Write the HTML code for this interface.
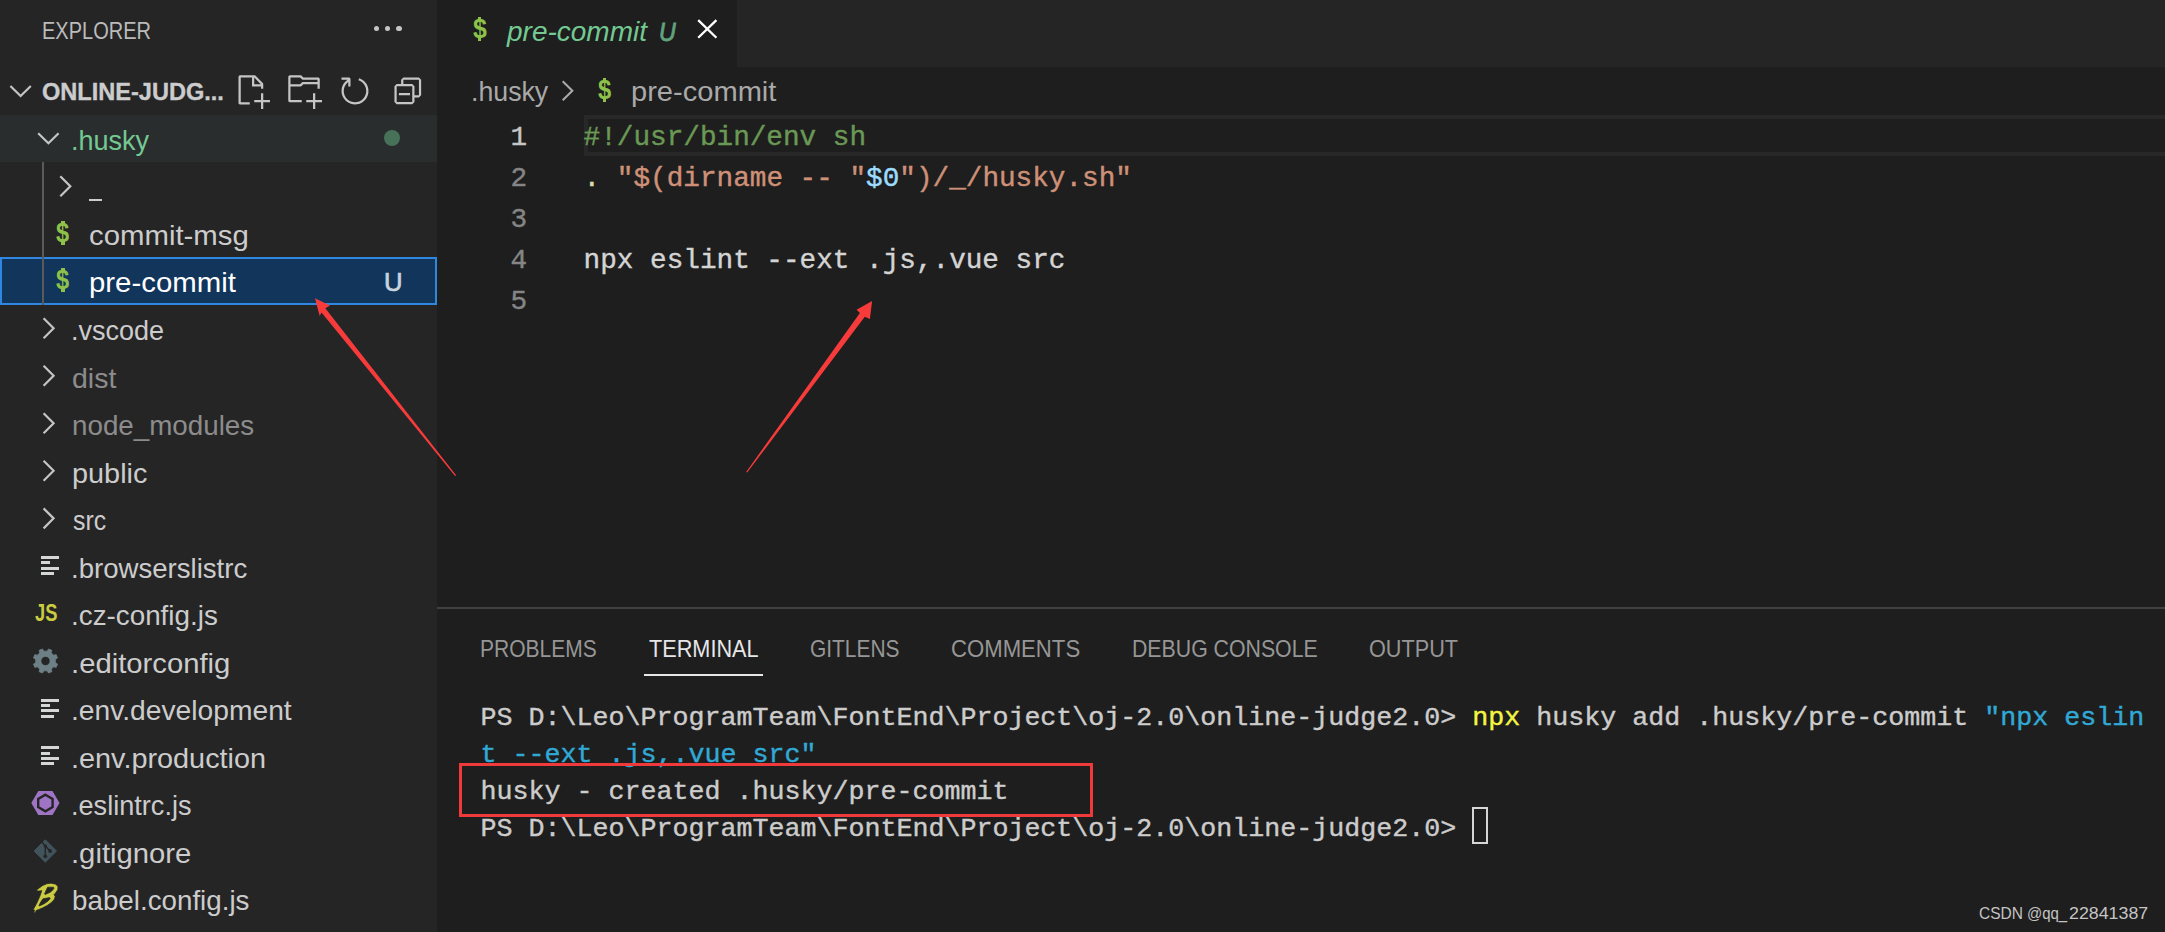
<!DOCTYPE html>
<html>
<head>
<meta charset="utf-8">
<title>pre-commit</title>
<style>
*{box-sizing:border-box;margin:0;padding:0}
html,body{width:2165px;height:932px;overflow:hidden;background:#1e1e1e}
body{font-family:"Liberation Sans",sans-serif;color:#cccccc;position:relative}
.abs{position:absolute}
.t{position:absolute;white-space:pre;transform-origin:0 0;line-height:1}
svg{position:absolute;overflow:visible}
#side{position:absolute;left:0;top:0;width:437px;height:932px;background:#252526}
</style>
</head>
<body>
<div id="side"></div>
<div class="t" style="left:41.85px;top:20px;font-size:23.5px;color:#bbbbbb;transform:scaleX(0.8515);">EXPLORER</div>
<div class="abs" style="left:374.00px;top:25.90px;width:5.4px;height:5.4px;border-radius:50%;background:#c5c5c5"></div>
<div class="abs" style="left:385.00px;top:25.90px;width:5.4px;height:5.4px;border-radius:50%;background:#c5c5c5"></div>
<div class="abs" style="left:396.20px;top:25.90px;width:5.4px;height:5.4px;border-radius:50%;background:#c5c5c5"></div>
<svg style="left:0;top:0" width="437" height="932"><polyline points="10.400000000000002,86 20.6,96 30.8,86" fill="none" stroke="#c5c5c5" stroke-width="2.2"/></svg>
<div class="t" style="left:42.30px;top:81px;font-size:23.5px;color:#cccccc;transform:scaleX(1.0019);font-weight:bold;-webkit-text-stroke:0.35px;">ONLINE-JUDG...</div>
<div class="abs" style="left:0;top:115px;width:437px;height:47px;background:#2a2d2e"></div>
<div class="abs" style="left:0;top:257px;width:437px;height:48px;background:#11355b;border:2px solid #3087df"></div>
<div class="abs" style="left:42px;top:162px;width:2px;height:143px;background:#5a5a5a"></div>
<svg style="left:0;top:0" width="437" height="932"><polyline points="38.2,133.2 48.4,143.2 58.599999999999994,133.2" fill="none" stroke="#c5c5c5" stroke-width="2.2"/></svg>
<div class="t" style="left:70.97px;top:127px;font-size:28px;color:#73c991;transform:scaleX(0.9655);">.husky</div>
<div class="abs" style="left:383.7px;top:129.7px;width:16.6px;height:16.6px;border-radius:50%;background:#48715a"></div>
<svg style="left:0;top:0" width="437" height="932"><polyline points="60.3,176.2 70.3,186.2 60.3,196.2" fill="none" stroke="#c5c5c5" stroke-width="2.2"/></svg>
<div class="abs" style="left:89px;top:199px;width:12.7px;height:2.2px;background:#cccccc"></div>
<div class="t" style="left:56.10px;top:219px;font-size:28px;color:#8dc149;transform:scaleX(0.8437);font-weight:bold;">$</div>
<div class="abs" style="left:61.15px;top:220.80px;width:3.4px;height:4.5px;background:#8dc149"></div>
<div class="abs" style="left:61.15px;top:241.30px;width:3.4px;height:4px;background:#8dc149"></div>
<div class="t" style="left:88.65px;top:222px;font-size:28px;color:#cccccc;transform:scaleX(1.0482);">commit-msg</div>
<div class="t" style="left:56.10px;top:266px;font-size:28px;color:#8dc149;transform:scaleX(0.8437);font-weight:bold;">$</div>
<div class="abs" style="left:61.15px;top:267.80px;width:3.4px;height:4.5px;background:#8dc149"></div>
<div class="abs" style="left:61.15px;top:288.30px;width:3.4px;height:4px;background:#8dc149"></div>
<div class="t" style="left:88.65px;top:269px;font-size:28px;color:#ffffff;transform:scaleX(1.0486);">pre-commit</div>
<div class="t" style="left:383.86px;top:269px;font-size:26.5px;color:#c8d4df;transform:scaleX(0.9688);-webkit-text-stroke:0.7px;">U</div>
<svg style="left:0;top:0" width="437" height="932"><polyline points="43.6,318.28000000000003 53.6,328.28000000000003 43.6,338.28000000000003" fill="none" stroke="#c5c5c5" stroke-width="2.2"/></svg>
<div class="t" style="left:70.97px;top:317px;font-size:28px;color:#cccccc;transform:scaleX(0.9646);">.vscode</div>
<svg style="left:0;top:0" width="437" height="932"><polyline points="43.6,365.8 53.6,375.8 43.6,385.8" fill="none" stroke="#c5c5c5" stroke-width="2.2"/></svg>
<div class="t" style="left:71.88px;top:365px;font-size:28px;color:#8c8c8c;transform:scaleX(1.0165);">dist</div>
<svg style="left:0;top:0" width="437" height="932"><polyline points="43.6,413.32 53.6,423.32 43.6,433.32" fill="none" stroke="#c5c5c5" stroke-width="2.2"/></svg>
<div class="t" style="left:71.91px;top:412px;font-size:28px;color:#8c8c8c;transform:scaleX(0.9918);">node_modules</div>
<svg style="left:0;top:0" width="437" height="932"><polyline points="43.6,460.84000000000003 53.6,470.84000000000003 43.6,480.84000000000003" fill="none" stroke="#c5c5c5" stroke-width="2.2"/></svg>
<div class="t" style="left:71.87px;top:460px;font-size:28px;color:#cccccc;transform:scaleX(1.0311);">public</div>
<svg style="left:0;top:0" width="437" height="932"><polyline points="43.6,508.36 53.6,518.36 43.6,528.36" fill="none" stroke="#c5c5c5" stroke-width="2.2"/></svg>
<div class="t" style="left:72.90px;top:507px;font-size:28px;color:#cccccc;transform:scaleX(0.8868);">src</div>
<div class="t" style="left:71.03px;top:555px;font-size:28px;color:#cccccc;transform:scaleX(0.9852);">.browserslistrc</div>
<div class="t" style="left:71.01px;top:602px;font-size:28px;color:#cccccc;transform:scaleX(0.9930);">.cz-config.js</div>
<div class="t" style="left:70.91px;top:650px;font-size:28px;color:#cccccc;transform:scaleX(1.0445);">.editorconfig</div>
<div class="t" style="left:70.98px;top:697px;font-size:28px;color:#cccccc;transform:scaleX(1.0079);">.env.development</div>
<div class="t" style="left:70.94px;top:745px;font-size:28px;color:#cccccc;transform:scaleX(1.0301);">.env.production</div>
<div class="t" style="left:71.06px;top:792px;font-size:28px;color:#cccccc;transform:scaleX(0.9682);">.eslintrc.js</div>
<div class="t" style="left:70.91px;top:840px;font-size:28px;color:#cccccc;transform:scaleX(1.0443);">.gitignore</div>
<div class="t" style="left:72.01px;top:887px;font-size:28px;color:#cccccc;transform:scaleX(0.9915);">babel.config.js</div>
<div class="abs" style="left:40.8px;top:556.0px;width:18.3px;height:3px;background:#d4d7d6"></div>
<div class="abs" style="left:40.8px;top:561.4px;width:9.2px;height:3px;background:#d4d7d6"></div>
<div class="abs" style="left:40.8px;top:566.8px;width:18.3px;height:3px;background:#d4d7d6"></div>
<div class="abs" style="left:40.8px;top:572.2px;width:13px;height:3px;background:#d4d7d6"></div>
<div class="abs" style="left:40.8px;top:698.6px;width:18.3px;height:3px;background:#d4d7d6"></div>
<div class="abs" style="left:40.8px;top:704.0px;width:9.2px;height:3px;background:#d4d7d6"></div>
<div class="abs" style="left:40.8px;top:709.4px;width:18.3px;height:3px;background:#d4d7d6"></div>
<div class="abs" style="left:40.8px;top:714.8px;width:13px;height:3px;background:#d4d7d6"></div>
<div class="abs" style="left:40.8px;top:746.1px;width:18.3px;height:3px;background:#d4d7d6"></div>
<div class="abs" style="left:40.8px;top:751.5px;width:9.2px;height:3px;background:#d4d7d6"></div>
<div class="abs" style="left:40.8px;top:756.9px;width:18.3px;height:3px;background:#d4d7d6"></div>
<div class="abs" style="left:40.8px;top:762.3px;width:13px;height:3px;background:#d4d7d6"></div>
<div class="t" style="left:34.80px;top:602px;font-size:23px;color:#cbcb41;transform:scaleX(0.7952);font-weight:bold;">JS</div>
<svg style="left:233.85px;top:72.6px" width="36.00" height="36.00" viewBox="0 0 16 16"><path d="M9.5 1.1l3.4 3.5.1.4v2h-1V6H8V2H3v11h4v1H2.5l-.5-.5v-12l.5-.5h6.7l.3.1zM9 2v3h2.9L9 2zm4 14h-1v-3H9v-1h3V9h1v3h3v1h-3v3z" fill="#c5c5c5"/></svg>
<svg style="left:285.6px;top:72.6px" width="36.00" height="36.00" viewBox="0 0 16 16"><path d="M14.5 2H7.71l-.85-.85L6.51 1h-5l-.5.5v11l.5.5H7v-1H1.99V6h4.49l.35-.15.86-.86H14v1.5l-.001.51h1.011V2.5L14.5 2zm-.51 2h-6.5l-.35.15-.86.86H2v-3h4.29l.85.85.36.15H14l-.01.99zM13 16h-1v-3H9v-1h3V9h1v3h3v1h-3v3z" fill="#c5c5c5"/></svg>
<svg style="left:337.2px;top:72.6px" width="36.00" height="36.00" viewBox="0 0 16 16"><path d="M4.681 3H2V2h3.5l.5.5V6H5V4a5 5 0 1 0 4.53-.761l.302-.954A6 6 0 1 1 4.681 3z" fill="#c5c5c5"/></svg>
<svg style="left:389.8px;top:72.8px" width="35.60" height="35.60" viewBox="0 0 16 16"><path d="M9 9H4v1h5V9z M5 3l1-1h7l1 1v7l-1 1h-2v2l-1 1H3l-1-1V6l1-1h2V3zm1 2h4l1 1v4h2V3H6v2zm4 1H3v7h7V6z" fill="#c5c5c5" fill-rule="evenodd" clip-rule="evenodd"/></svg>
<svg style="left:0;top:0" width="437" height="932"><path d="M55.35 662.74 L57.53 664.00 L56.13 667.39 L53.69 666.74 L51.24 669.19 L51.89 671.63 L48.50 673.03 L47.24 670.85 L43.76 670.85 L42.50 673.03 L39.11 671.63 L39.76 669.19 L37.31 666.74 L34.87 667.39 L33.47 664.00 L35.65 662.74 L35.65 659.26 L33.47 658.00 L34.87 654.61 L37.31 655.26 L39.76 652.81 L39.11 650.37 L42.50 648.97 L43.76 651.15 L47.24 651.15 L48.50 648.97 L51.89 650.37 L51.24 652.81 L53.69 655.26 L56.13 654.61 L57.53 658.00 L55.35 659.26Z M40.90 661.00 a4.6 4.6 0 1 0 9.2 0 a4.6 4.6 0 1 0 -9.2 0Z" fill="#6d8086" fill-rule="evenodd" stroke="#6d8086" stroke-width="0.8" stroke-linejoin="round"/></svg>
<svg style="left:0;top:0" width="437" height="932"><polygon points="31.299999999999997,803 38.29,790.9 52.51,790.9 59.5,803 52.51,815.1 38.29,815.1" fill="#a074c4"/><polygon points="45.40,794.70 52.59,798.85 52.59,807.15 45.40,811.30 38.21,807.15 38.21,798.85" fill="none" stroke="#252526" stroke-width="2.4"/></svg>
<svg style="left:0;top:0" width="437" height="932"><polygon points="34.099999999999994,851 45.3,839.8 56.5,851 45.3,862.2" fill="#41535b" stroke="#41535b" stroke-width="1" stroke-linejoin="round"/><path d="M41.65 841.8 L45.3 845.9 V856.3 M45.3 845.9 L50.099999999999994 851" stroke="#252526" stroke-width="1.4" fill="none"/><circle cx="45.3" cy="845.9" r="1.6" fill="#252526"/><circle cx="50.099999999999994" cy="851" r="1.9" fill="#252526"/><circle cx="45.3" cy="856.3" r="1.9" fill="#252526"/></svg>
<svg style="left:0;top:0" width="437" height="932"><path d="M36.01 890.52 L38.64 888.45 L42.39 885.63 L46.90 883.76 L51.03 883.19 L55.54 884.13 L57.98 886.38 L57.79 889.39 L56.29 892.02 L54.04 894.65 L55.16 896.53 L54.41 899.15 L51.78 902.16 L47.65 905.16 L42.77 907.79 L38.26 909.67 L36.38 910.23 L34.88 913.05 L33.94 912.30 L34.58 910.05 L33.19 909.67 L36.76 903.29 L39.77 896.53 L41.83 890.70 L38.64 890.97Z M47.65 887.14 L53.47 887.21 L54.04 888.08 L52.54 890.33 L49.91 892.39 L45.02 894.57 L44.54 893.97 L46.34 889.77Z M42.96 898.78 L49.53 897.58 L50.28 898.40 L48.03 901.03 L44.27 903.66 L39.39 905.99 L38.94 905.46 L40.89 901.78Z" fill="#cbcb41" fill-rule="evenodd" stroke="#252526" stroke-width="0.7" stroke-linejoin="round"/></svg>
<div class="abs" style="left:437px;top:0;width:1728px;height:66.5px;background:#252526"></div>
<div class="abs" style="left:437px;top:0;width:300px;height:66.5px;background:#1e1e1e"></div>
<div class="t" style="left:472.70px;top:15px;font-size:28px;color:#8dc149;transform:scaleX(0.8875);font-weight:bold;">$</div>
<div class="abs" style="left:478.10px;top:16.70px;width:3.4px;height:4.5px;background:#8dc149"></div>
<div class="abs" style="left:478.10px;top:37.20px;width:3.4px;height:4px;background:#8dc149"></div>
<div class="t" style="left:507.00px;top:18px;font-size:28px;color:#73c991;transform:scaleX(0.9998);font-style:italic;">pre-commit</div>
<div class="t" style="left:658.93px;top:19px;font-size:26.5px;color:#62a37e;transform:scaleX(0.8737);font-style:italic;-webkit-text-stroke:0.9px;">U</div>
<svg style="left:0;top:0" width="2165" height="120"><path d="M698.2 20.1 L716.4 37.8 M716.4 20.1 L698.2 37.8" stroke="#ffffff" stroke-width="2.3" fill="none"/></svg>
<div class="t" style="left:470.79px;top:78px;font-size:28px;color:#a9a9a9;transform:scaleX(0.9541);">.husky</div>
<svg style="left:0;top:0" width="2165" height="120"><polyline points="562.7,81.2 572.3,90.7 562.7,100.2" fill="none" stroke="#a9a9a9" stroke-width="2.1"/></svg>
<div class="t" style="left:598.00px;top:76px;font-size:28px;color:#8dc149;transform:scaleX(0.8500);font-weight:bold;">$</div>
<div class="abs" style="left:603.10px;top:77.80px;width:3.4px;height:4.5px;background:#8dc149"></div>
<div class="abs" style="left:603.10px;top:98.30px;width:3.4px;height:4px;background:#8dc149"></div>
<div class="t" style="left:631.36px;top:78px;font-size:28px;color:#a9a9a9;transform:scaleX(1.0385);">pre-commit</div>
<div class="abs" style="left:584px;top:115px;width:1581px;height:41px;border:4px solid #282828;border-right:none"></div>
<div class="t" style="left:510.6px;top:124px;font-size:27.7px;font-family:'Liberation Mono',monospace;-webkit-text-stroke:0.4px;"><span style="color:#c6c6c6">1</span></div>
<div class="t" style="left:510.6px;top:165px;font-size:27.7px;font-family:'Liberation Mono',monospace;-webkit-text-stroke:0.4px;"><span style="color:#858585">2</span></div>
<div class="t" style="left:510.6px;top:206px;font-size:27.7px;font-family:'Liberation Mono',monospace;-webkit-text-stroke:0.4px;"><span style="color:#858585">3</span></div>
<div class="t" style="left:510.6px;top:247px;font-size:27.7px;font-family:'Liberation Mono',monospace;-webkit-text-stroke:0.4px;"><span style="color:#858585">4</span></div>
<div class="t" style="left:510.6px;top:288px;font-size:27.7px;font-family:'Liberation Mono',monospace;-webkit-text-stroke:0.4px;"><span style="color:#858585">5</span></div>
<div class="t" style="left:583.6px;top:124px;font-size:27.7px;font-family:'Liberation Mono',monospace;-webkit-text-stroke:0.4px;"><span style="color:#6a9955">#!/usr/bin/env sh</span></div>
<div class="t" style="left:583.6px;top:165px;font-size:27.7px;font-family:'Liberation Mono',monospace;-webkit-text-stroke:0.4px;"><span style="color:#dcdcaa">.</span><span style="color:#d4d4d4"> </span><span style="color:#ce9178">"$(dirname -- "</span><span style="color:#9cdcfe">$0</span><span style="color:#ce9178">")/_/husky.sh"</span></div>
<div class="t" style="left:583.6px;top:247px;font-size:27.7px;font-family:'Liberation Mono',monospace;-webkit-text-stroke:0.4px;"><span style="color:#d4d4d4">npx eslint --ext .js,.vue src</span></div>
<div class="abs" style="left:437px;top:607px;width:1728px;height:2px;background:#414141"></div>
<div class="t" style="left:480.12px;top:637px;font-size:23.8px;color:#969696;transform:scaleX(0.8821);">PROBLEMS</div>
<div class="t" style="left:649.00px;top:637px;font-size:23.8px;color:#e7e7e7;transform:scaleX(0.9110);">TERMINAL</div>
<div class="t" style="left:810.02px;top:637px;font-size:23.8px;color:#969696;transform:scaleX(0.8794);">GITLENS</div>
<div class="t" style="left:951.27px;top:637px;font-size:23.8px;color:#969696;transform:scaleX(0.9304);">COMMENTS</div>
<div class="t" style="left:1131.81px;top:637px;font-size:23.8px;color:#969696;transform:scaleX(0.8944);">DEBUG CONSOLE</div>
<div class="t" style="left:1368.89px;top:637px;font-size:23.8px;color:#969696;transform:scaleX(0.9098);">OUTPUT</div>
<div class="abs" style="left:644px;top:674px;width:119px;height:2px;background:#e7e7e7"></div>
<div class="t" style="left:480.5px;top:705px;font-size:26.667px;font-family:'Liberation Mono',monospace;-webkit-text-stroke:0.4px;"><span style="color:#cccccc">PS D:\Leo\ProgramTeam\FontEnd\Project\oj-2.0\online-judge2.0&gt; </span><span style="color:#f5f543">npx</span><span style="color:#cccccc"> husky add .husky/pre-commit </span><span style="color:#31a9d6">"npx eslin</span></div>
<div class="t" style="left:480.5px;top:742px;font-size:26.667px;font-family:'Liberation Mono',monospace;-webkit-text-stroke:0.4px;"><span style="color:#31a9d6">t --ext .js,.vue src"</span></div>
<div class="t" style="left:480.5px;top:779px;font-size:26.667px;font-family:'Liberation Mono',monospace;-webkit-text-stroke:0.4px;"><span style="color:#cccccc">husky - created .husky/pre-commit</span></div>
<div class="t" style="left:480.5px;top:816px;font-size:26.667px;font-family:'Liberation Mono',monospace;-webkit-text-stroke:0.4px;"><span style="color:#cccccc">PS D:\Leo\ProgramTeam\FontEnd\Project\oj-2.0\online-judge2.0&gt; </span></div>
<div class="abs" style="left:1472px;top:806.6px;width:16.2px;height:37.7px;border:2.1px solid #d6d6d6"></div>
<div class="abs" style="left:459.2px;top:763.3px;width:634px;height:53.6px;border:3.3px solid #ee3a3a"></div>
<div class="t" style="left:1979.30px;top:906px;font-size:16.6px;color:#c4c4c4;transform:scaleX(0.9341);opacity:.999;">CSDN</div>
<div class="t" style="left:2027.40px;top:906px;font-size:16.6px;color:#c4c4c4;transform:scaleX(0.9029);opacity:.999;">@qq_</div>
<div class="t" style="left:2069.40px;top:906px;font-size:16.6px;color:#c4c4c4;transform:scaleX(1.0734);opacity:.999;">22841387</div>
<svg style="left:0;top:0" width="2165" height="932"><polygon points="315,298.3 330,305.4 325.3,308.2 456.1,475.3 455.1,476.1 321.5,312.5 319.7,316.1" fill="#f73b3b"/><polygon points="872.1,301.1 856.6,309.7 859.9,312.9 746.2,471.9 747.2,472.6 864.8,316.8 869.9,318.9" fill="#f73b3b"/></svg>
</body>
</html>
